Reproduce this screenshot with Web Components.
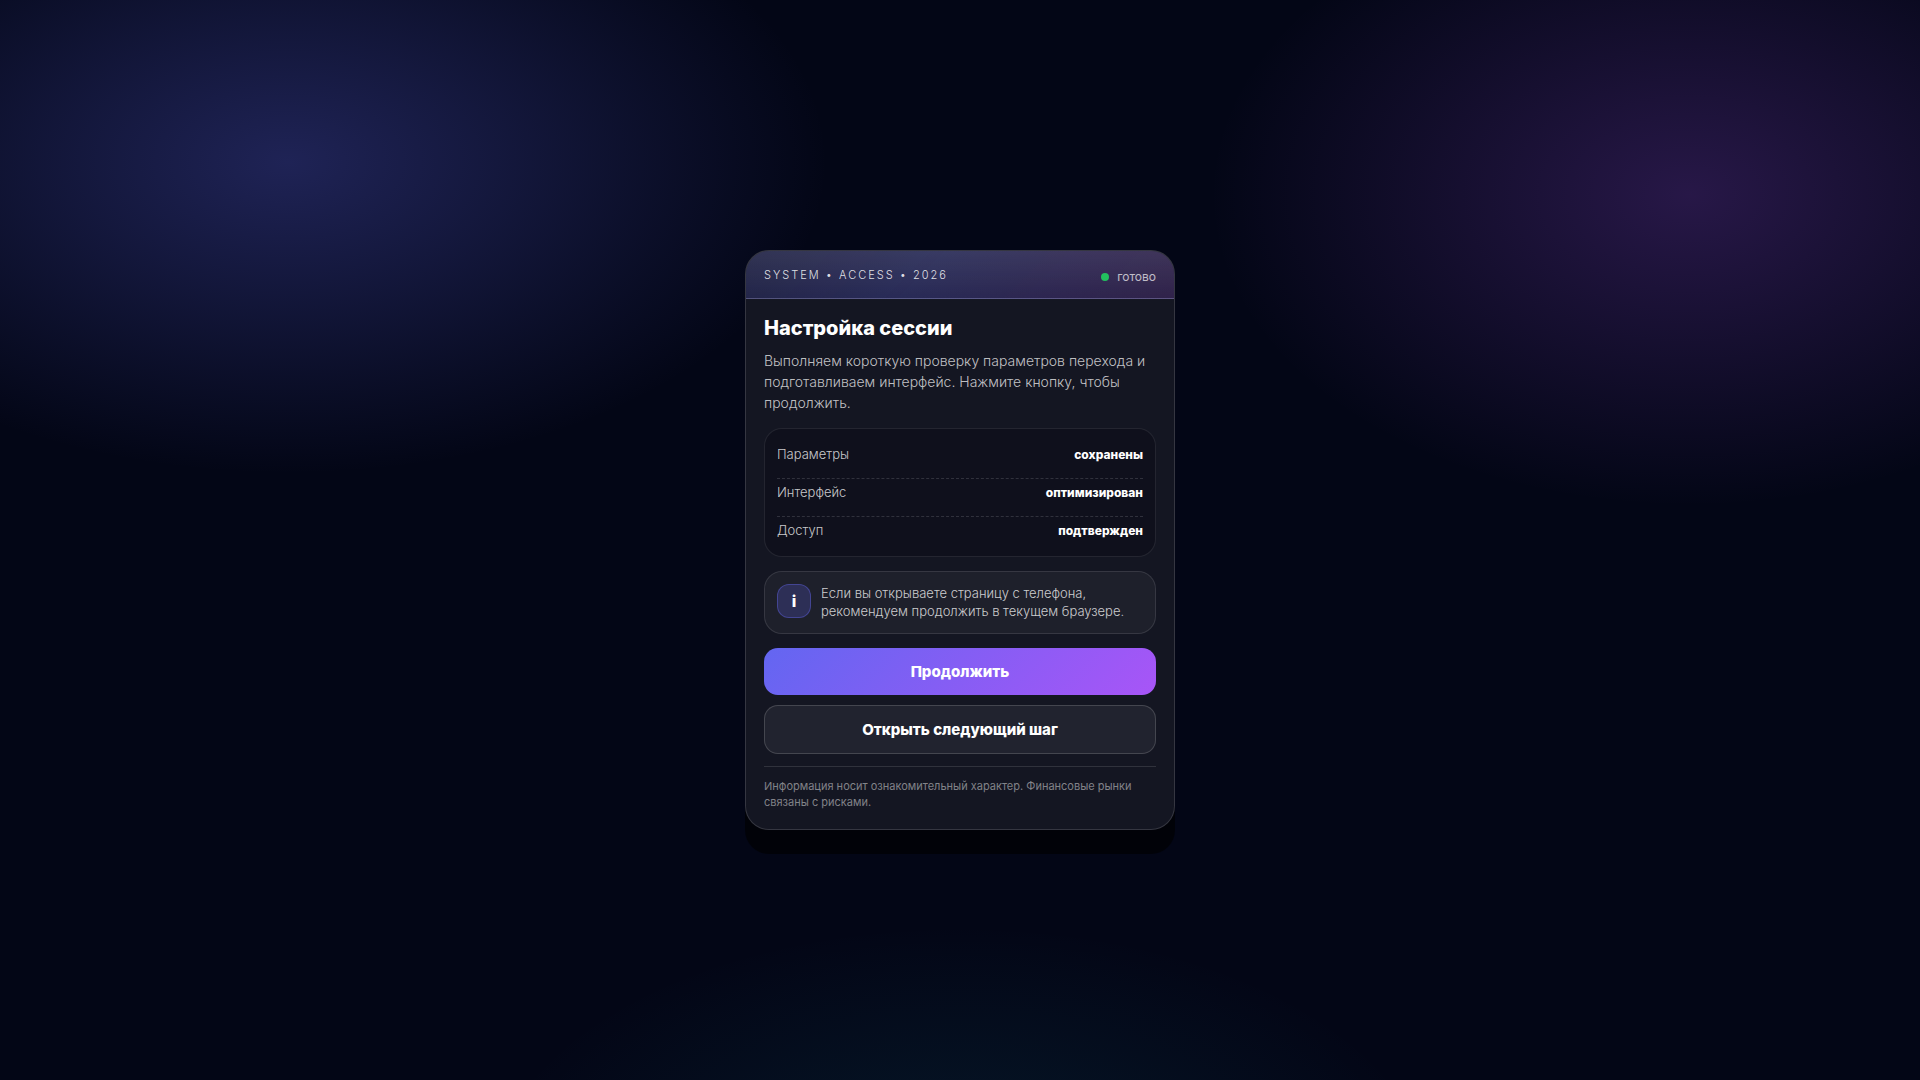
<!DOCTYPE html>
<html lang="ru">
<head>
<meta charset="utf-8">
<meta name="viewport" content="width=device-width, initial-scale=1">
<title>Настройка сессии</title>
<style>
  body { margin: 0; }
</style>
</head>
<body>
<session-page>
  <session-card>
    <span slot="kicker">SYSTEM • ACCESS • 2026</span>
    <status-dot slot="status">готово</status-dot>
    <h1 slot="title">Настройка сессии</h1>
    <p slot="lead">Выполняем короткую проверку параметров перехода и подготавливаем интерфейс. Нажмите кнопку, чтобы продолжить.</p>
    <check-list>
      <check-row label="Параметры">сохранены</check-row>
      <check-row label="Интерфейс">оптимизирован</check-row>
      <check-row label="Доступ">подтвержден</check-row>
    </check-list>
    <info-note>Если вы открываете страницу с телефона, рекомендуем продолжить в текущем браузере.</info-note>
    <action-group>
      <action-button variant="primary">Продолжить</action-button>
      <action-button variant="ghost">Открыть следующий шаг</action-button>
    </action-group>
    <span slot="footer">Информация носит ознакомительный характер. Финансовые рынки связаны с рисками.</span>
  </session-card>
</session-page>

<script>
const component = (name, html) => {
  const template = document.createElement('template');
  template.innerHTML = '<style>*{box-sizing:border-box}</style>' + html;
  customElements.define(name, class extends HTMLElement {
    constructor() {
      super();
      this.attachShadow({ mode: 'open' }).append(template.content.cloneNode(true));
    }
    connectedCallback() {
      const label = this.shadowRoot.querySelector('[data-label]');
      if (label) label.textContent = this.getAttribute('label');
    }
  });
};

component('session-page', `
  <style>
    :host {
      box-sizing: border-box;
      display: grid;
      place-items: center;
      min-height: 100vh;
      padding: 18px;
      font-family: Inter, "Noto Sans", sans-serif;
      color: #fff;
      background:
        radial-gradient(900px 520px at 15% 15%, rgba(99,106,241,.29), transparent 60%),
        radial-gradient(800px 520px at 88% 18%, rgba(168,85,247,.22), transparent 60%),
        radial-gradient(800px 440px at 50% 110%, rgba(34,211,238,.09), transparent 60%),
        #030616;
    }
  </style>
  <slot></slot>`);

component('session-card', `
  <style>
    :host {
      box-sizing: border-box;
      display: block;
      width: 100%;
      max-width: 430px;
      overflow: hidden;
      border: 1px solid rgba(255,255,255,.14);
      border-radius: 24px;
      background: #141622;
      box-shadow: 0 24px 0 rgba(0,0,0,.6);
    }
    header {
      display: flex;
      justify-content: space-between;
      align-items: flex-start;
      padding: 16px 18px 12px;
      border-bottom: 1px solid rgba(190,185,255,.24);
      background:
        linear-gradient(180deg, rgba(255,255,255,.08), transparent),
        linear-gradient(135deg, rgba(99,102,241,.17), rgba(99,102,241,.25) 40%, rgba(168,85,247,.19));
    }
    slot[name=kicker] {
      display: block;
      font-size: 11px;
      line-height: 16px;
      font-weight: 300;
      letter-spacing: 2px;
      color: rgba(255,255,255,.86);
    }
    main {
      display: flex;
      flex-direction: column;
      gap: 14px;
      padding: 17px 18px 19px;
    }
    .intro { display: flex; flex-direction: column; gap: 10px; padding-bottom: 1px; }
    ::slotted(h1) { margin: 0; font-size: 20px; line-height: 24px; font-weight: 800; }
    ::slotted(p) { margin: 0; font-size: 14px; line-height: 21px; font-weight: 300; color: rgba(255,255,255,.74); }
    footer {
      margin-top: -2px;
      padding-top: 11px;
      border-top: 1px solid rgba(255,255,255,.12);
      font-size: 11px;
      line-height: 16px;
      color: rgba(255,255,255,.47);
    }
  </style>
  <header><slot name="kicker"></slot><slot name="status"></slot></header>
  <main>
    <div class="intro"><slot name="title"></slot><slot name="lead"></slot></div>
    <slot></slot>
    <footer><slot name="footer"></slot></footer>
  </main>`);

component('status-dot', `
  <style>
    :host { display: flex; align-items: center; gap: 8px; font-size: 12px; line-height: 19px; color: rgba(255,255,255,.7); }
    i { width: 8px; height: 8px; border-radius: 50%; background: #22c05e; }
  </style>
  <i></i><span><slot></slot></span>`);

component('check-list', `
  <style>
    :host {
      display: flex;
      flex-direction: column;
      gap: 4px;
      padding: 16px 12px;
      border: 1px solid rgba(255,255,255,.09);
      border-radius: 18px;
      background: rgba(3,5,16,.28);
    }
  </style>
  <slot></slot>`);

component('check-row', `
  <style>
    :host {
      display: flex;
      justify-content: space-between;
      gap: 12px;
      padding-bottom: 14px;
      border-bottom: 1px dashed rgba(255,255,255,.14);
      font-size: 13px;
      line-height: 19px;
      font-weight: 300;
      color: rgba(255,255,255,.78);
    }
    :host(:last-child) { padding-bottom: 0; border-bottom: 0; }
    b { font-size: 12px; font-weight: 800; color: #fff; }
  </style>
  <span data-label></span><b><slot></slot></b>`);

component('info-note', `
  <style>
    :host {
      display: flex;
      gap: 10px;
      padding: 12px 12px 13px;
      border: 1px solid rgba(255,255,255,.11);
      border-radius: 18px;
      background: rgba(255,255,255,.045);
      font-size: 13px;
      line-height: 18px;
      font-weight: 300;
      color: rgba(255,255,255,.78);
    }
    .badge {
      flex: none;
      display: grid;
      place-items: center;
      width: 34px;
      height: 34px;
      border: 1px solid rgba(99,102,241,.4);
      border-radius: 12px;
      background: rgba(99,102,241,.22);
      font-size: 16px;
      font-weight: 800;
      color: #fff;
    }
  </style>
  <span class="badge">i</span><span><slot></slot></span>`);

component('action-group', `
  <style>:host { display: flex; flex-direction: column; gap: 10px; }</style>
  <slot></slot>`);

component('action-button', `
  <style>
    :host { display: block; }
    button {
      display: block;
      width: 100%;
      margin: 0;
      padding: 14px;
      border: 0;
      border-radius: 14px;
      font: 800 15px/19px Inter, "Noto Sans", sans-serif;
      color: #fff;
      background: linear-gradient(135deg, #6366f1, #a855f7);
      cursor: pointer;
    }
    :host([variant=ghost]) button {
      border: 1px solid rgba(255,255,255,.16);
      background: rgba(255,255,255,.06);
    }
  </style>
  <button type="button"><slot></slot></button>`);
</script>
</body>
</html>
